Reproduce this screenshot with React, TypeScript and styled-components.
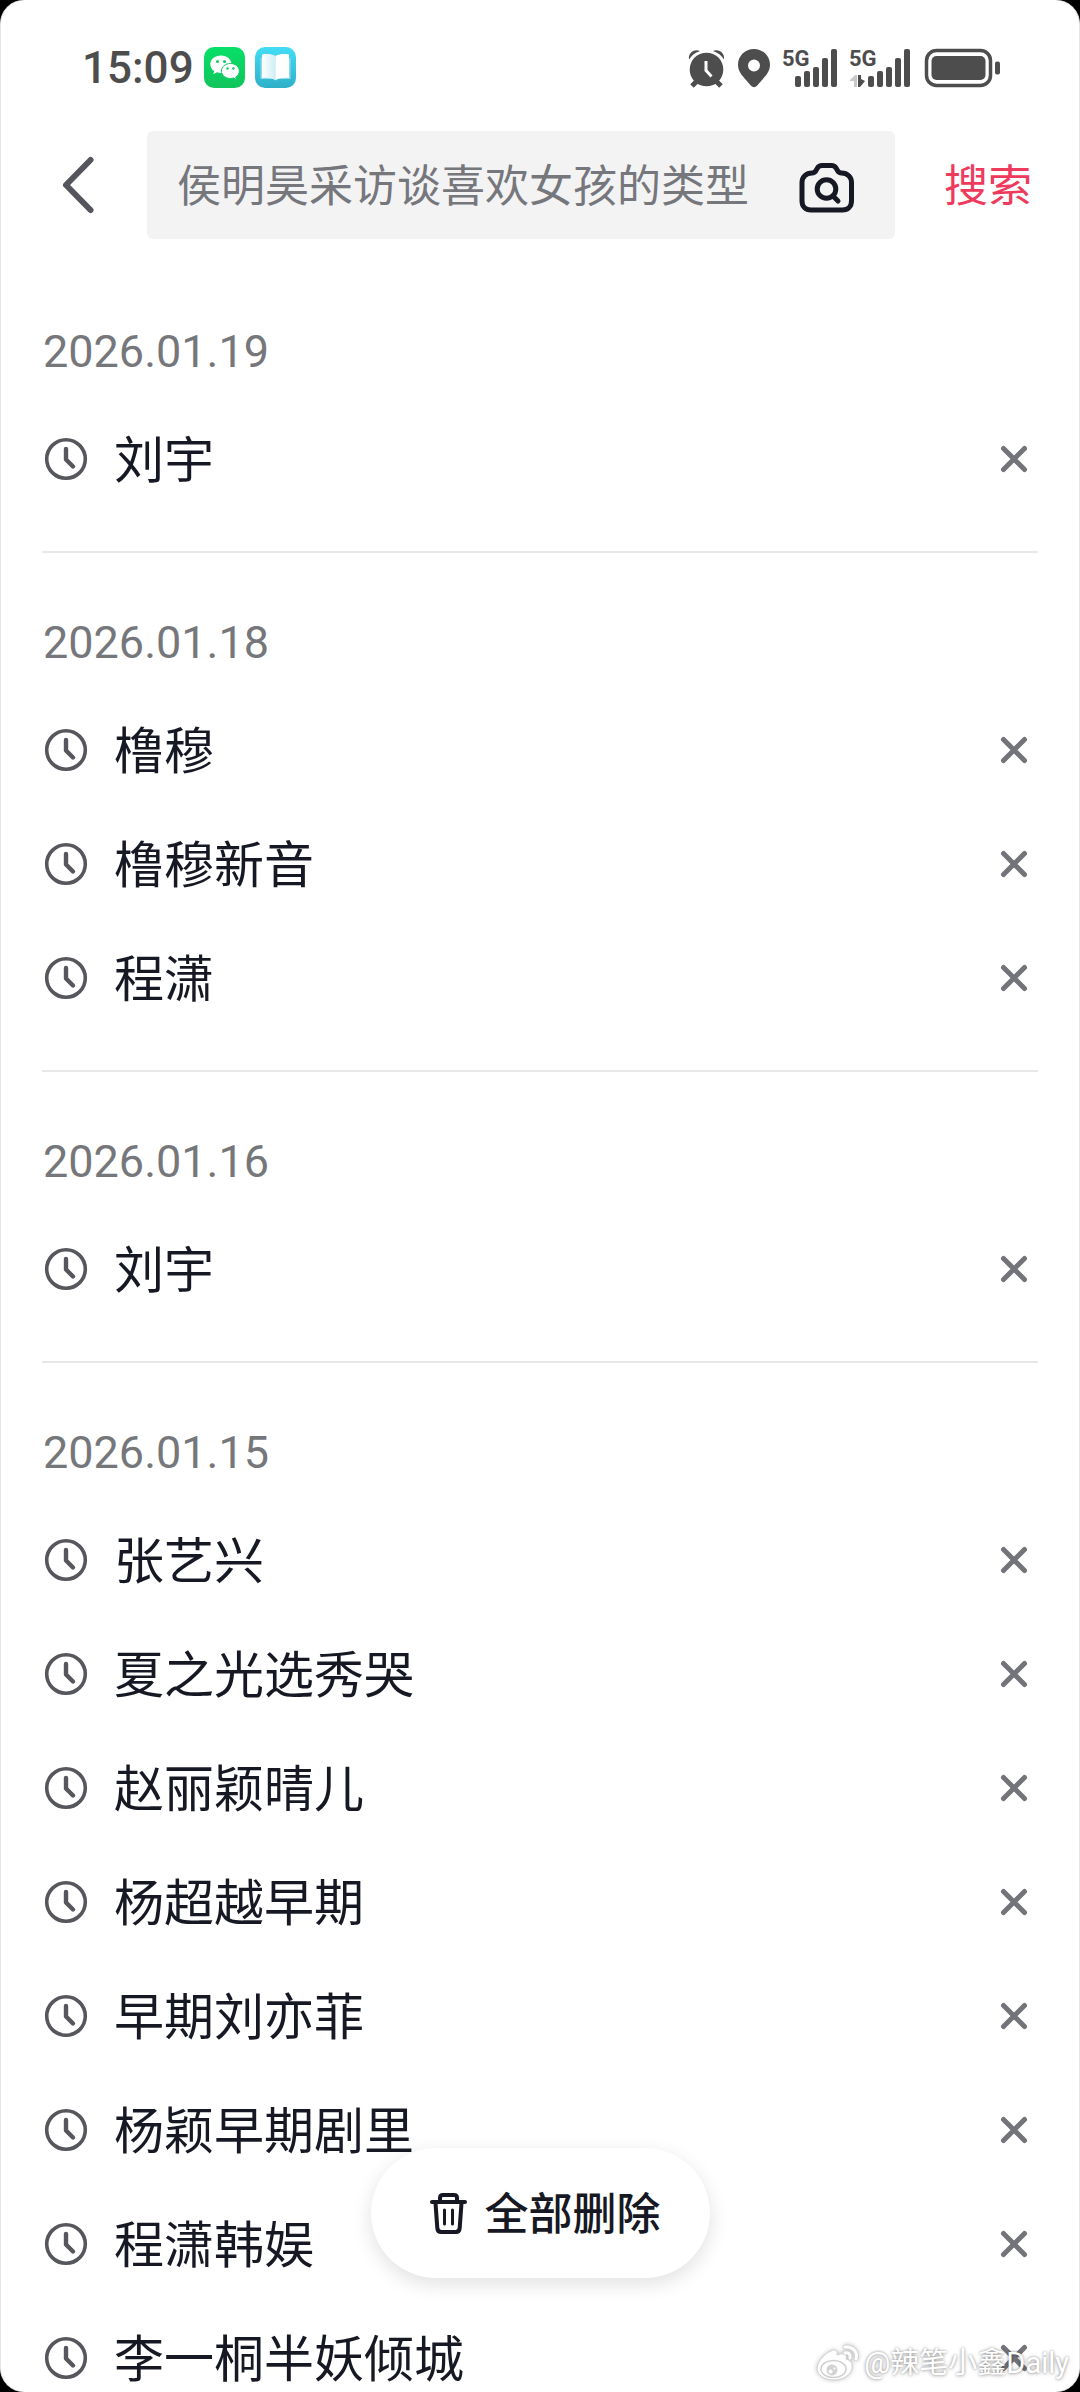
import React, { useState } from "react";
import styled, { createGlobalStyle } from "styled-components";

const GlobalStyle = createGlobalStyle`
  * { box-sizing: border-box; }
  body {
    margin: 0;
    background: #000;
    font-family: Roboto, "Noto Sans CJK SC", sans-serif;
    color: #161823;
  }
  button, input { font: inherit; color: inherit; }
  button {
    border: 0;
    padding: 0;
    background: none;
    cursor: pointer;
  }
`;

const Screen = styled.div`
  position: relative;
  display: flex;
  flex-direction: column;
  height: 100vh;
  overflow: hidden;
  background: #fff;
  border: solid #e4e4e4;
  border-width: 0 1px;
  border-radius: 24px;
`;

const StatusBar = styled.div`
  flex: none;
  display: flex;
  align-items: center;
  justify-content: space-between;
  height: 131px;
  padding: 4px 79px 0 81px;
  color: #4d4d4d;
`;

const StatusGroup = styled.div<{ $gap: number }>`
  display: flex;
  align-items: center;
  gap: ${(p) => p.$gap}px;
`;

const Time = styled.time`
  font-size: 44px;
  line-height: 52px;
  font-weight: 500;
`;

const SignalBox = styled.div`
  display: grid;
  height: 40px;
  > * { grid-area: 1 / 1; }
  > svg { justify-self: end; }
`;

const SignalLabel = styled.span`
  font-family: "Liberation Sans Narrow", Roboto, sans-serif;
  font-size: 22px;
  line-height: 22px;
  font-weight: 700;
`;

const Header = styled.header`
  flex: none;
  display: flex;
  align-items: center;
  height: 108px;
  padding: 0 47px 0 41px;
`;

const BackButton = styled.button`
  display: flex;
  align-items: center;
  width: 105px;
  height: 72px;
`;

const SearchBox = styled.label`
  flex: 1;
  min-width: 0;
  display: flex;
  align-items: center;
  height: 108px;
  padding: 0 38px 0 30px;
  background: #f3f3f4;
  border-radius: 6px;
`;

const SearchInput = styled.input`
  flex: 1;
  min-width: 0;
  height: 72px;
  padding: 3px 0 0;
  border: 0;
  outline: 0;
  background: none;
  font-size: 44px;
  &::placeholder { color: #76777c; opacity: 1; }
`;

const IconButton = styled.button`
  flex: none;
  display: flex;
  align-items: center;
  justify-content: center;
`;

const SearchButton = styled.button`
  flex: none;
  margin-left: 49px;
  padding-top: 3px;
  font-size: 44px;
  line-height: 64px;
  color: #ee3a5c;
`;

const List = styled.main`
  flex: 1;
  min-height: 0;
  overflow-y: auto;
  scrollbar-width: none;
  padding: 23px 41px 0;
`;

const Group = styled.section`
  padding-bottom: 35px;
  & + & { border-top: 2px solid #e8e8e9; }
  & + &, &:first-child { padding-top: 62px; }
`;

const DateTitle = styled.h2`
  margin: 0 0 22px;
  padding-left: 1px;
  font-size: 45px;
  line-height: 56px;
  font-weight: 400;
  color: #76777b;
`;

const Rows = styled.ul`
  margin: 0;
  padding: 0;
  list-style: none;
`;

const Row = styled.li`
  display: flex;
  align-items: center;
  justify-content: space-between;
  height: 114px;
`;

const Term = styled.button`
  display: flex;
  align-items: center;
  gap: 24px;
  font-size: 50px;
  line-height: 72px;
  white-space: nowrap;
`;

const Label = styled.span`
  padding-top: 3px;
`;

const DeleteDock = styled.div`
  position: absolute;
  left: 0;
  right: 0;
  bottom: 114px;
  display: flex;
  justify-content: center;
  pointer-events: none;
`;

const DeleteAll = styled.button`
  display: flex;
  align-items: center;
  gap: 14px;
  height: 130px;
  padding: 0 49px 0 56px;
  border-radius: 65px;
  background: #fff;
  box-shadow: 0 6px 20px rgba(0, 0, 0, 0.12);
  font-size: 44px;
  line-height: 64px;
  font-weight: 500;
  pointer-events: auto;
`;

const Watermark = styled.div`
  position: absolute;
  right: 10px;
  bottom: 7px;
  display: flex;
  align-items: center;
  gap: 4px;
  color: #fff;
  font-size: 29px;
  line-height: 44px;
  text-shadow: 0 0 3px rgba(0, 0, 0, 0.4), 0 1px 4px rgba(0, 0, 0, 0.2);
  pointer-events: none;
  svg { filter: drop-shadow(0 0 2px rgba(0, 0, 0, 0.25)); }
`;

const WechatIcon = () => (
  <svg width="41" height="41" viewBox="0 0 41 41" aria-hidden="true">
    <defs>
      <linearGradient id="wechat" x1="0" y1="0" x2="0" y2="1">
        <stop offset="0" stopColor="#06e068" />
        <stop offset="1" stopColor="#12c45c" />
      </linearGradient>
    </defs>
    <rect width="41" height="41" rx="10" fill="url(#wechat)" />
    <path d="M17 8.5c-6 0-10.700 3.900-10.700 8.800 0 2.800 1.500 5.200 3.900 6.800l-.9 3.200 3.600-2c1.300.4 2.600.6 4.100.6 6 0 10.600-3.800 10.600-8.600S23 8.500 17 8.500z" fill="#fff" />
    <path d="M26.400 16.500c-5 0-9 3.300-9 7.500s4 7.500 9 7.500c1.100 0 2.200-.2 3.200-.5l2.900 1.700-.7-2.700c2.200-1.400 3.500-3.500 3.500-6 0-4.200-3.900-7.500-8.900-7.500z" fill="#fff" stroke="#10cc60" strokeWidth="1" />
    <g fill="#10cc60">
      <circle cx="13.500" cy="14.500" r="1.500" />
      <circle cx="20.500" cy="14.500" r="1.500" />
      <circle cx="23.500" cy="21.500" r="1.200" />
      <circle cx="29.300" cy="21.500" r="1.200" />
    </g>
  </svg>
);

const BookIcon = () => (
  <svg width="41" height="41" viewBox="0 0 41 41" aria-hidden="true">
    <defs>
      <linearGradient id="book" x1="0" y1="0" x2="0" y2="1">
        <stop offset="0" stopColor="#44dcf5" />
        <stop offset="1" stopColor="#2fb0c9" />
      </linearGradient>
      <linearGradient id="page" x1="0" y1="0" x2="1" y2="0">
        <stop offset="0" stopColor="#fff" />
        <stop offset="1" stopColor="#cdeef5" />
      </linearGradient>
    </defs>
    <rect width="41" height="41" rx="10" fill="url(#book)" />
    <path d="M5.500 11h30v21H23l-2.500 1.500L18 32H5.500z" fill="#8fdcec" />
    <path d="M7 7.500c5-.8 10-.6 13.500 1.500v24c-3.500-2-8.500-2.500-13.500-2z" fill="url(#page)" />
    <path d="M34 7.500c-5-.8-10-.6-13.500 1.500v24c3.500-2 8.500-2.500 13.500-2z" fill="#fff" />
  </svg>
);

const AlarmIcon = () => (
  <svg width="38" height="40" viewBox="0 0 38 40" aria-hidden="true">
    <g stroke="currentColor" strokeWidth="5" fill="none">
      <path d="M9 33l-5 5M28 33l5 5" />
    </g>
    <path d="M1 11.500C0 5 6 .5 12 3 7 4.500 3.500 7.500 1 11.500zM36 11.500C37 5 31 .5 25 3c5 1.500 8.500 4.500 11 8.500z" fill="currentColor" />
    <circle cx="18.500" cy="21.500" r="16.800" fill="currentColor" />
    <path d="M18 13v9.500l5.500 6" stroke="#fff" strokeWidth="3" fill="none" />
  </svg>
);

const PinIcon = () => (
  <svg width="32" height="40" viewBox="0 0 32 40" aria-hidden="true">
    <path
      fillRule="evenodd"
      d="M16 1C7 1 0 8 0 16.800c0 6.500 4 10.700 8 15.200l5 5.800c1.800 1.900 4.200 1.900 6 0l5-5.800c4-4.500 8-8.700 8-15.200C32 8 25 1 16 1zm0 10.500a6 6 0 1 1 0 12 6 6 0 0 1 0-12z"
      fill="currentColor"
    />
  </svg>
);

const BAR_HEIGHTS = [11, 16, 20, 29, 38];

const Signal = ({ data }: { data?: boolean }) => {
  const width = data ? 61 : 55;
  return (
    <SignalBox>
      <svg width={width} height="40" viewBox={`0 0 ${width} 40`} aria-hidden="true">
        {BAR_HEIGHTS.map((h, i) => (
          <rect key={h} x={width - 42 + i * 9} y={39 - h} width="6" height={h} rx="2" fill="currentColor" />
        ))}
        {data && (
          <>
            <path d="M0 33l6-6h2v12H5v-6z" fill="#c9c9c9" />
            <path d="M9 27h3v4l4 2-5 6H9z" fill="currentColor" />
          </>
        )}
      </svg>
      <SignalLabel>5G</SignalLabel>
    </SignalBox>
  );
};

const BatteryIcon = () => (
  <svg width="78" height="40" viewBox="0 0 78 40" aria-hidden="true">
    <rect x="4.500" y="2.500" width="64" height="35" rx="10" fill="none" stroke="currentColor" strokeWidth="3.500" />
    <rect x="9.500" y="8" width="54" height="24" rx="5" fill="currentColor" />
    <rect x="73" y="13.500" width="5" height="13" rx="2" fill="currentColor" />
  </svg>
);

const BackIcon = () => (
  <svg width="72" height="72" viewBox="0 0 72 72" fill="none" stroke="#55565d" strokeWidth="6" strokeLinecap="round" strokeLinejoin="round" aria-hidden="true">
    <path d="M48.500 11L24 36l24.500 25" />
  </svg>
);

const CameraIcon = () => (
  <svg width="60" height="60" viewBox="0 0 60 60" fill="none" stroke="#161823" strokeWidth="5" strokeLinecap="round" strokeLinejoin="round" aria-hidden="true">
    <path d="M25 10.500h9.500c2 0 3.500.8 4.500 2.500l1.500 2.500c.9 1.600 2.300 2.500 4 2.500 6 0 10 4 10 9.500V46c0 5.500-3.500 9-9 9H14c-5.500 0-9-3.500-9-9V27.500C5 22 9 18 15 18c1.700 0 3.100-.9 4-2.500l1.500-2.500c1-1.700 2.500-2.500 4.500-2.500z" />
    <circle cx="29.500" cy="34" r="9.300" />
    <path d="M36 41l5 5" />
  </svg>
);

const ClockIcon = () => (
  <svg width="48" height="48" viewBox="0 0 48 48" fill="none" stroke="#56575c" strokeLinecap="round" strokeLinejoin="round" aria-hidden="true">
    <circle cx="24" cy="24" r="19.300" strokeWidth="3.600" />
    <path d="M24 14v10.500l7 7" strokeWidth="4.400" />
  </svg>
);

const CloseIcon = () => (
  <svg width="48" height="48" viewBox="0 0 48 48" fill="none" stroke="#737479" strokeWidth="5" strokeLinecap="round" aria-hidden="true">
    <path d="M13.500 13.500l21 21M34.500 13.500l-21 21" />
  </svg>
);

const TrashIcon = () => (
  <svg width="44" height="44" viewBox="0 0 44 44" fill="none" stroke="#161823" strokeWidth="4" strokeLinecap="round" strokeLinejoin="round" aria-hidden="true">
    <path d="M5 11h33M13 10V7c0-2 1.200-3 3-3h11c1.800 0 3 1 3 3v3" />
    <path d="M8.500 12l1.800 25c.2 2.500 1.500 4 4 4h14.400c2.500 0 3.800-1.500 4-4l1.800-25" />
    <path d="M17.500 19v14M25.500 19v14" strokeWidth="3" />
  </svg>
);

const WeiboIcon = () => (
  <svg width="44" height="38" viewBox="0 0 44 38" aria-hidden="true">
    <path
      d="M15 7c4-2 7-1 6 4 5-2 11-2 9 4 4 1 7 4 6 9-1 7-9 12-18 12S1 31 1 25C1 18 8 10 15 7z"
      fill="#fff"
      stroke="#d0d0d0"
      strokeWidth="1"
    />
    <ellipse cx="17.500" cy="25" rx="12.500" ry="8.500" fill="#fff" stroke="#cfcfcf" strokeWidth="1.500" />
    <circle cx="16" cy="26" r="5.500" fill="#d2d2d2" />
    <circle cx="14.500" cy="27.500" r="2" fill="#fff" />
    <circle cx="18.500" cy="24.500" r="1" fill="#fff" />
    <g fill="none" strokeLinecap="round">
      <path d="M29 3c8-1 13 5 11 12M29 9c4-1 6 2 5 5" stroke="#d0d0d0" strokeWidth="4.500" />
      <path d="M29 3c8-1 13 5 11 12M29 9c4-1 6 2 5 5" stroke="#fff" strokeWidth="3" />
    </g>
  </svg>
);

const INITIAL = [
  { date: "2026.01.19", terms: ["刘宇"] },
  { date: "2026.01.18", terms: ["橹穆", "橹穆新音", "程潇"] },
  { date: "2026.01.16", terms: ["刘宇"] },
  {
    date: "2026.01.15",
    terms: ["张艺兴", "夏之光选秀哭", "赵丽颖晴儿", "杨超越早期", "早期刘亦菲", "杨颖早期剧里", "程潇韩娱", "李一桐半妖倾城"],
  },
];

export default function App() {
  const [history, setHistory] = useState(INITIAL);
  const [query, setQuery] = useState("");

  const remove = (date: string, term: string) =>
    setHistory((groups) =>
      groups
        .map((g) => (g.date === date ? { ...g, terms: g.terms.filter((t) => t !== term) } : g))
        .filter((g) => g.terms.length > 0)
    );

  return (
    <>
      <GlobalStyle />
      <Screen lang="zh-CN">
        <StatusBar>
          <StatusGroup $gap={10}>
            <Time>15:09</Time>
            <WechatIcon />
            <BookIcon />
          </StatusGroup>
          <StatusGroup $gap={12}>
            <AlarmIcon />
            <PinIcon />
            <Signal />
            <Signal data />
            <BatteryIcon />
          </StatusGroup>
        </StatusBar>

        <Header>
          <BackButton type="button" aria-label="返回">
            <BackIcon />
          </BackButton>
          <SearchBox>
            <SearchInput
              type="text"
              aria-label="搜索"
              placeholder="侯明昊采访谈喜欢女孩的类型"
              value={query}
              onChange={(e) => setQuery(e.target.value)}
            />
            <IconButton type="button" aria-label="拍照搜索">
              <CameraIcon />
            </IconButton>
          </SearchBox>
          <SearchButton type="button">搜索</SearchButton>
        </Header>

        <List>
          {history.map((group) => (
            <Group key={group.date}>
              <DateTitle>{group.date}</DateTitle>
              <Rows>
                {group.terms.map((term) => (
                  <Row key={term}>
                    <Term type="button" onClick={() => setQuery(term)}>
                      <ClockIcon />
                      <Label>{term}</Label>
                    </Term>
                    <IconButton type="button" aria-label={`删除 ${term}`} onClick={() => remove(group.date, term)}>
                      <CloseIcon />
                    </IconButton>
                  </Row>
                ))}
              </Rows>
            </Group>
          ))}
        </List>

        <DeleteDock>
          <DeleteAll type="button" onClick={() => setHistory([])}>
            <TrashIcon />
            <Label>全部删除</Label>
          </DeleteAll>
        </DeleteDock>

        <Watermark>
          <WeiboIcon />
          @辣笔小鑫Daily
        </Watermark>
      </Screen>
    </>
  );
}
